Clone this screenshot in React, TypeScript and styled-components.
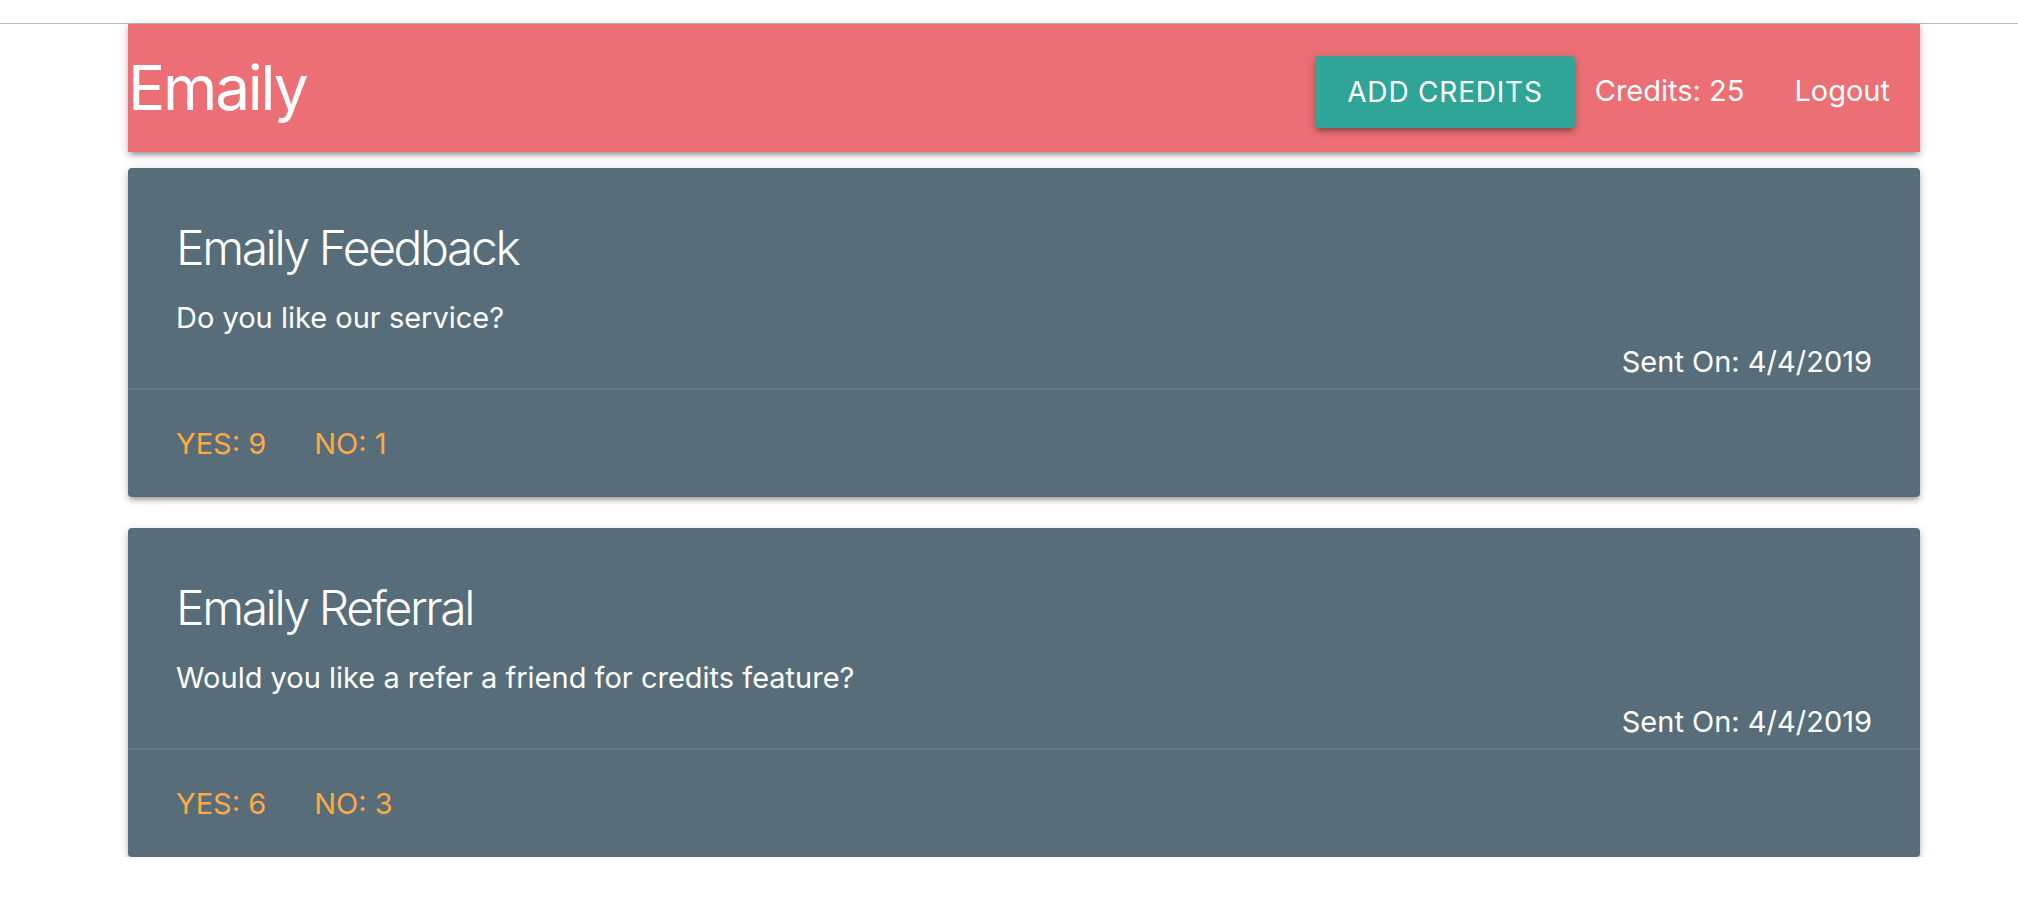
import React from "react";
import styled, { createGlobalStyle } from "styled-components";

const Global = createGlobalStyle`
  html, body { margin: 0; padding: 0; background: #ffffff; }
  body {
    font-family: Inter, "Noto Sans", Roboto, sans-serif;
    font-size: 29px;
    line-height: 1.5;
    color: rgba(0,0,0,0.87);
  }
  * { box-sizing: border-box; }
`;

const TopStrip = styled.div`
  height: 24px;
  border-bottom: 1px solid #bcbcbc;
`;

const Container = styled.div`
  margin-left: 128px;
  width: 1792px;
`;

const Nav = styled.nav`
  height: 128px;
  background: #eb6f74;
  color: #fff;
  display: flex;
  align-items: center;
  justify-content: space-between;
  box-shadow: 0 4px 4px 0 rgba(0,0,0,0.14), 0 6px 2px -4px rgba(0,0,0,0.12), 0 2px 10px 0 rgba(0,0,0,0.2);
  position: relative;
  z-index: 1;
`;

const Brand = styled.a`
  font-size: 62px;
  line-height: 128px;
  color: #fff;
  text-decoration: none;
  letter-spacing: -2.2px;
`;

const Menu = styled.ul`
  list-style: none;
  margin: 0;
  padding: 6px 0 0;
  display: flex;
  align-items: center;
  height: 128px;
`;

const MenuItem = styled.li<{ $gap?: number }>`
  margin: 0 ${(p) => p.$gap ?? 0}px;
  font-size: 29px;
  line-height: 122px;
  display: flex;
  align-items: center;
`;

const NavLink = styled.a`
  color: #fff;
  text-decoration: none;
  padding: 0 30px;
`;

const Button = styled.button`
  height: 72px;
  margin-top: 1px;
  padding: 0 32px;
  border: none;
  border-radius: 4px;
  background: #2fa598;
  color: #fff;
  font-family: inherit;
  font-size: 28px;
  letter-spacing: 0.8px;
  text-transform: uppercase;
  line-height: 72px;
  box-shadow: 0 4px 4px 0 rgba(0,0,0,0.14), 0 6px 2px -4px rgba(0,0,0,0.12), 0 2px 10px 0 rgba(0,0,0,0.2);
  cursor: pointer;
`;

const List = styled.div`
  display: flex;
  flex-direction: column;
  gap: 31px;
  padding-top: 16px;
`;

const Card = styled.div`
  background: #576e7a;
  color: #fff;
  border-radius: 4px;
  box-shadow: 0 4px 4px 0 rgba(0,0,0,0.14), 0 6px 2px -4px rgba(0,0,0,0.12), 0 2px 10px 0 rgba(0,0,0,0.2);
`;

const CardContent = styled.div`
  padding: 48px 48px 0;
  height: 219.5px;
`;

const CardTitle = styled.span`
  display: block;
  font-size: 48px;
  font-weight: 300;
  line-height: 64px;
  letter-spacing: -2.4px;
  margin-bottom: 16px;
`;

const Body = styled.p<{ $right?: boolean }>`
  margin: 0;
  font-size: 29px;
  line-height: 43.5px;
  text-align: ${(p) => (p.$right ? "right" : "left")};
`;

const CardAction = styled.div`
  border-top: 2px solid rgba(160,160,160,0.2);
  padding: 32px 48px;
  display: flex;
  gap: 48px;
  line-height: 43.5px;
`;

const Count = styled.a`
  color: #ffa944;
  text-transform: uppercase;
  text-decoration: none;
  font-size: 29px;
`;

const surveys = [
  { title: "Emaily Feedback", body: "Do you like our service?", date: "4/4/2019", yes: 9, no: 1 },
  { title: "Emaily Referral", body: "Would you like a refer a friend for credits feature?", date: "4/4/2019", yes: 6, no: 3 },
];

export default function App() {
  return (
    <>
      <Global />
      <TopStrip />
      <Container>
        <Nav>
          <Brand href="#">Emaily</Brand>
          <Menu>
            <MenuItem>
              <Button>Add Credits</Button>
            </MenuItem>
            <MenuItem $gap={20}>Credits: 25</MenuItem>
            <MenuItem>
              <NavLink href="#">Logout</NavLink>
            </MenuItem>
          </Menu>
        </Nav>
        <List>
          {surveys.map((s) => (
            <Card key={s.title}>
              <CardContent>
                <CardTitle>{s.title}</CardTitle>
                <Body>{s.body}</Body>
                <Body $right>Sent On: {s.date}</Body>
              </CardContent>
              <CardAction>
                <Count href="#">Yes: {s.yes}</Count>
                <Count href="#">No: {s.no}</Count>
              </CardAction>
            </Card>
          ))}
        </List>
      </Container>
    </>
  );
}
